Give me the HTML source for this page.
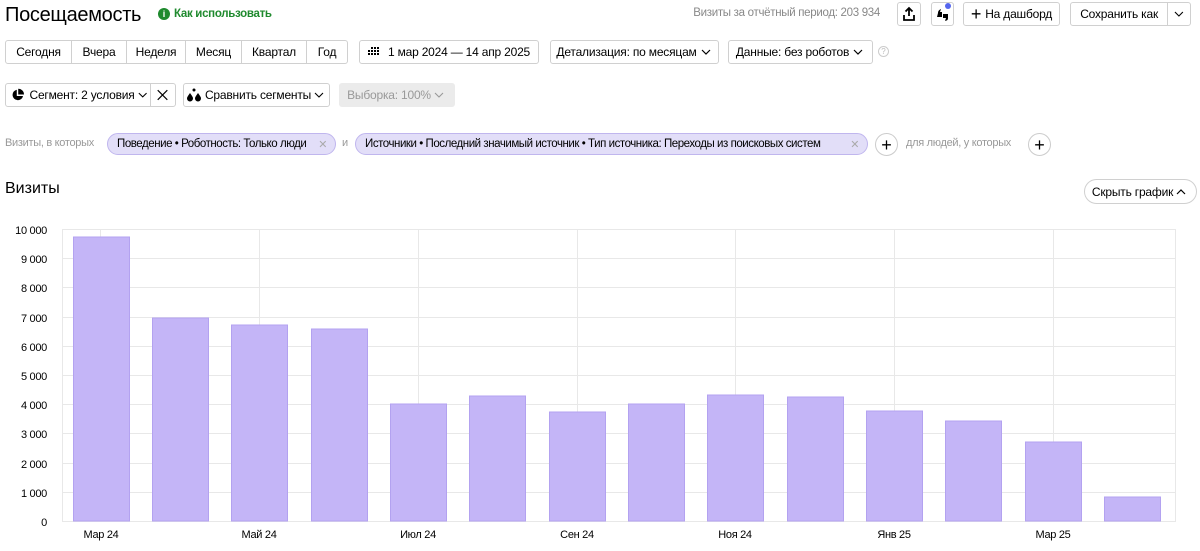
<!DOCTYPE html>
<html><head><meta charset="utf-8">
<style>
*{box-sizing:border-box;margin:0;padding:0}
body{width:1200px;height:551px;background:#fff;font-family:"Liberation Sans",Arial,sans-serif;color:#000;position:relative;overflow:hidden;font-size:12px}
.a{position:absolute}
.btn{position:absolute;height:24px;border:1px solid #d0d0d0;border-radius:3px;background:#fff;display:flex;align-items:center;justify-content:center;font-size:12px;white-space:nowrap;letter-spacing:-0.2px}
.seg{position:absolute;top:40px;height:24px;border:1px solid #d0d0d0;border-radius:3px;display:flex}
.seg div{display:flex;align-items:center;justify-content:center;border-right:1px solid #d0d0d0;height:22px;font-size:12px;letter-spacing:-0.2px}
.seg div:last-child{border-right:none}
.chip{position:absolute;top:133px;height:22px;border:1px solid #c0b6ee;background:#e2def8;border-radius:11px;display:flex;align-items:center;padding-left:9px;font-size:11.5px;white-space:nowrap;letter-spacing:-0.45px;overflow:hidden}
.chip .x{color:#aaa;position:absolute;right:8px;font-size:11px}
.plus{position:absolute;width:23px;height:23px;border:1px solid #ccc;border-radius:50%;display:flex;align-items:center;justify-content:center;font-size:18px;line-height:1;background:#fff}
.gray{color:#999;letter-spacing:-0.3px}
</style></head><body>
<div class="a" style="left:5px;top:4px;font-size:20px;letter-spacing:-0.3px">Посещаемость</div>
<div class="a" style="left:158px;top:8px;width:12px;height:12px;border-radius:50%;background:#1f8a2e;color:#fff;font-size:9px;font-weight:bold;text-align:center;line-height:12px">i</div>
<div class="a" style="left:174px;top:8px;color:#1f8a2e;font-size:11.5px;font-weight:bold;letter-spacing:-0.3px">Как использовать</div>

<div class="a gray" style="right:320px;top:7px;font-size:11.5px;color:#888">Визиты за отчётный период: 203 934</div>
<div class="btn" style="left:897px;top:2px;width:24px">
<svg width="14" height="16" viewBox="0 0 14 16"><path d="M7 2v8M3.5 5.5L7 2l3.5 3.5M2 9v5h10V9" fill="none" stroke="#000" stroke-width="1.8"/></svg></div>
<div class="btn" style="left:931px;top:2px;width:23px">
<svg width="16" height="14" viewBox="0 0 16 14"><path d="M3 6c0-2 1-3 3-4l-1 3h2v5H2z M8 7h5v4c0 2-1 2.5-3 3l1-3H8z" fill="#000"/></svg>
<div class="a" style="left:13px;top:0px;width:6px;height:6px;border-radius:50%;background:#5566ee"></div></div>
<div class="btn" style="left:963px;top:2px;width:97px"><span style="font-size:18px;margin-right:4px;line-height:1">+</span>На дашборд</div>
<div class="btn" style="left:1070px;top:2px;width:121px;justify-content:flex-start">
<span style="width:98px;text-align:center;border-right:1px solid #d0d0d0;line-height:22px">Сохранить как</span>
<svg width="22" height="10" viewBox="0 0 22 10"><path d="M7 3l4 4 4-4" fill="none" stroke="#000" stroke-width="1.1"/></svg></div>

<div class="seg" style="left:5px;width:343px">
<div style="width:66px">Сегодня</div><div style="width:55px">Вчера</div><div style="width:59px">Неделя</div><div style="width:56px">Месяц</div><div style="width:65px">Квартал</div><div style="width:40px">Год</div></div>
<div class="btn" style="left:359px;top:40px;width:180px">
<svg width="12" height="10" viewBox="0 0 12 10" style="margin-right:8px"><g fill="#000"><rect x="0" y="3" width="2" height="2"/><rect x="3" y="0" width="2" height="2"/><rect x="6" y="0" width="2" height="2"/><rect x="9" y="0" width="2" height="2"/><rect x="3" y="3" width="2" height="2"/><rect x="6" y="3" width="2" height="2"/><rect x="9" y="3" width="2" height="2"/><rect x="0" y="6" width="2" height="2"/><rect x="3" y="6" width="2" height="2"/><rect x="6" y="6" width="2" height="2"/><rect x="9" y="6" width="2" height="2"/></g></svg>1 мар 2024 — 14 апр 2025</div>
<div class="btn" style="left:550px;top:40px;width:169px">Детализация: по месяцам<svg width="16" height="10" viewBox="0 0 16 10"><path d="M5 3l4 4 4-4" fill="none" stroke="#000" stroke-width="1.2"/></svg></div>
<div class="btn" style="left:728px;top:40px;width:145px">Данные: без роботов<svg width="16" height="10" viewBox="0 0 16 10"><path d="M5 3l4 4 4-4" fill="none" stroke="#000" stroke-width="1.2"/></svg></div>
<div class="a" style="left:878px;top:46px;width:11px;height:11px;border:1px solid #ccc;border-radius:50%;font-size:8px;color:#bbb;text-align:center;line-height:9px">?</div>

<div class="btn" style="left:5px;top:83px;width:171px;justify-content:flex-start">
<span style="display:flex;align-items:center;width:145px;border-right:1px solid #d0d0d0;height:22px;padding-left:5px">
<svg width="14" height="14" viewBox="0 0 14 14" style="margin-right:5px"><path d="M6 1.5A5.5 5.5 0 1 0 12.5 8H6z M7.5 0.5V6.5h6A6 6 0 0 0 7.5 0.5z" fill="#000"/></svg>Сегмент: 2 условия<svg width="16" height="10" viewBox="0 0 16 10"><path d="M4 3l4 4 4-4" fill="none" stroke="#000" stroke-width="1.1"/></svg></span>
<svg width="25" height="14" viewBox="0 0 25 14"><path d="M7 2l10 10M17 2L7 12" stroke="#000" stroke-width="1.2"/></svg></div>
<div class="btn" style="left:183px;top:83px;width:147px"><svg width="16" height="14" viewBox="0 0 16 14" style="margin-right:3px"><g fill="#000"><path d="M4 5c-2 3-3 4-3 5.5a3 3 0 0 0 6 0C7 9 6 8 4 5z"/><path d="M12 5c-2 3-3 4-3 5.5a3 3 0 0 0 6 0C15 9 14 8 12 5z"/><circle cx="8" cy="2" r="1.5"/></g></svg>Сравнить сегменты<svg width="16" height="10" viewBox="0 0 16 10"><path d="M4 3l4 4 4-4" fill="none" stroke="#000" stroke-width="1.1"/></svg></div>
<div class="btn" style="left:339px;top:83px;width:116px;background:#ebebeb;border-color:#ebebeb;color:#999">Выборка: 100%<svg width="16" height="10" viewBox="0 0 16 10"><path d="M4 3l4 4 4-4" fill="none" stroke="#999" stroke-width="1.1"/></svg></div>

<div class="a gray" style="left:5px;top:137px;font-size:11px">Визиты, в которых</div>
<div class="chip" style="left:107px;width:229px">Поведение • Роботность: Только люди<span class="x">✕</span></div>
<div class="a gray" style="left:342px;top:137px;font-size:11px">и</div>
<div class="chip" style="left:355px;width:513px">Источники • Последний значимый источник • Тип источника: Переходы из поисковых систем<span class="x">✕</span></div>
<div class="plus" style="left:875px;top:133px">+</div>
<div class="a gray" style="left:906px;top:137px;font-size:11px">для людей, у которых</div>
<div class="plus" style="left:1028px;top:133px">+</div>

<div class="a" style="left:5px;top:180px;font-size:16px">Визиты</div>
<div class="btn" style="left:1084px;top:179px;width:113px;height:25px;border-radius:13px">Скрыть график<svg width="16" height="10" viewBox="0 0 16 10"><path d="M4 7l4-4 4 4" fill="none" stroke="#000" stroke-width="1.2"/></svg></div>

<svg class="a" style="left:0;top:0" width="1200" height="551" viewBox="0 0 1200 551">
<g stroke="#e8e8e8" stroke-width="1">
<line x1="62" y1="229.5" x2="1175" y2="229.5"/><line x1="62" y1="258.5" x2="1175" y2="258.5"/><line x1="62" y1="287.5" x2="1175" y2="287.5"/><line x1="62" y1="317.5" x2="1175" y2="317.5"/><line x1="62" y1="346.5" x2="1175" y2="346.5"/><line x1="62" y1="375.5" x2="1175" y2="375.5"/><line x1="62" y1="404.5" x2="1175" y2="404.5"/><line x1="62" y1="433.5" x2="1175" y2="433.5"/><line x1="62" y1="463.5" x2="1175" y2="463.5"/><line x1="62" y1="492.5" x2="1175" y2="492.5"/><line x1="62" y1="521.5" x2="1175" y2="521.5"/>
<line x1="62.5" y1="229" x2="62.5" y2="522"/><line x1="1175.5" y1="229" x2="1175.5" y2="522"/>
<line x1="100.5" y1="229" x2="100.5" y2="522"/><line x1="259.5" y1="229" x2="259.5" y2="522"/><line x1="418.5" y1="229" x2="418.5" y2="522"/><line x1="577.5" y1="229" x2="577.5" y2="522"/><line x1="735.5" y1="229" x2="735.5" y2="522"/><line x1="894.5" y1="229" x2="894.5" y2="522"/><line x1="1053.5" y1="229" x2="1053.5" y2="522"/>
</g>
<g fill="#c4b5f7" stroke="#b3a2f0" stroke-width="1">
<rect x="73.5" y="237" width="56" height="284"/>
<rect x="152.5" y="318" width="56" height="203"/>
<rect x="231.5" y="325" width="56" height="196"/>
<rect x="311.5" y="329" width="56" height="192"/>
<rect x="390.5" y="404" width="56" height="117"/>
<rect x="469.5" y="396" width="56" height="125"/>
<rect x="549.5" y="412" width="56" height="109"/>
<rect x="628.5" y="404" width="56" height="117"/>
<rect x="707.5" y="395" width="56" height="126"/>
<rect x="787.5" y="397" width="56" height="124"/>
<rect x="866.5" y="411" width="56" height="110"/>
<rect x="945.5" y="421" width="56" height="100"/>
<rect x="1025.5" y="442" width="56" height="79"/>
<rect x="1104.5" y="497" width="56" height="24"/>
</g>
<g font-family="Liberation Sans, Arial, sans-serif" font-size="11" fill="#000" text-anchor="end" letter-spacing="-0.3">
<text x="47" y="234">10 000</text><text x="47" y="263">9 000</text><text x="47" y="292">8 000</text><text x="47" y="322">7 000</text><text x="47" y="351">6 000</text><text x="47" y="380">5 000</text><text x="47" y="409">4 000</text><text x="47" y="438">3 000</text><text x="47" y="468">2 000</text><text x="47" y="497">1 000</text><text x="47" y="526">0</text>
</g>
<g font-family="Liberation Sans, Arial, sans-serif" font-size="11" fill="#000" text-anchor="middle" letter-spacing="-0.3">
<text x="101" y="538">Мар 24</text><text x="259" y="538">Май 24</text><text x="418" y="538">Июл 24</text><text x="577" y="538">Сен 24</text><text x="735" y="538">Ноя 24</text><text x="894" y="538">Янв 25</text><text x="1053" y="538">Мар 25</text>
</g>
</svg>
</body></html>
